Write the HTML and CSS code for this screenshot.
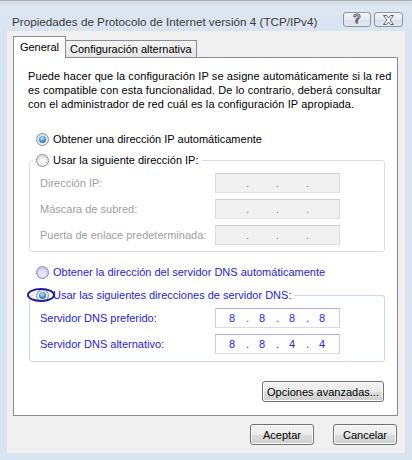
FILE: index.html
```html
<!DOCTYPE html>
<html lang="es">
<head>
    <meta charset="UTF-8">
    <title>Propiedades de Protocolo de Internet versión 4 (TCP/IPv4)</title>
    <link rel="stylesheet" href="styles.css">
</head>
<body>
    <div class="window">
        <div class="titlebar">
            <span class="title">Propiedades de Protocolo de Internet versión 4 (TCP/IPv4)</span>
            <div class="caption-buttons">
                <span class="caption-btn help">?</span>
                <span class="caption-btn close">
                    <svg width="13" height="10" viewBox="0 0 13 10">
                        <polygon points="1.5,0.5 4.5,0.5 6.5,3 8.5,0.5 11.5,0.5 8,5 11.5,9.5 8.5,9.5 6.5,7 4.5,9.5 1.5,9.5 5,5" fill="#fff" stroke="#5a6270" stroke-width="1" stroke-linejoin="round"/>
                    </svg>
                </span>
            </div>
        </div>
        <div class="client">
            <div class="tabs">
                <div class="tab active">General</div>
                <div class="tab">Configuración alternativa</div>
            </div>
            <div class="panel">
                <p class="intro">Puede hacer que la configuración IP se asigne automáticamente si la red<br>es compatible con esta funcionalidad. De lo contrario, deberá consultar<br>con el administrador de red cuál es la configuración IP apropiada.</p>

                <label class="radio-row first"><span class="radio checked"></span>Obtener una dirección IP automáticamente</label>

                <div class="group">
                    <label class="radio-row legend"><span class="radio"></span>Usar la siguiente dirección IP:</label>
                    <div class="field-row disabled">
                        <span>Dirección IP:</span>
                        <div class="ip"><span></span><i>.</i><span></span><i>.</i><span></span><i>.</i><span></span></div>
                    </div>
                    <div class="field-row disabled">
                        <span>Máscara de subred:</span>
                        <div class="ip"><span></span><i>.</i><span></span><i>.</i><span></span><i>.</i><span></span></div>
                    </div>
                    <div class="field-row disabled">
                        <span>Puerta de enlace predeterminada:</span>
                        <div class="ip"><span></span><i>.</i><span></span><i>.</i><span></span><i>.</i><span></span></div>
                    </div>
                </div>

                <label class="radio-row dns-auto"><span class="radio tinted"></span>Obtener la dirección del servidor DNS automáticamente</label>

                <div class="group dns-group">
                    <label class="radio-row legend"><span class="radio checked"></span>Usar las siguientes direcciones de servidor DNS:<span class="mark"></span></label>
                    <div class="field-row">
                        <span>Servidor DNS preferido:</span>
                        <div class="ip"><span>8</span><i>.</i><span>8</span><i>.</i><span>8</span><i>.</i><span>8</span></div>
                    </div>
                    <div class="field-row">
                        <span>Servidor DNS alternativo:</span>
                        <div class="ip"><span>8</span><i>.</i><span>8</span><i>.</i><span>4</span><i>.</i><span>4</span></div>
                    </div>
                </div>

                <div class="advanced">
                    <button class="button wide">Opciones avanzadas...</button>
                </div>
            </div>
            <div class="footer">
                <button class="button">Aceptar</button>
                <button class="button">Cancelar</button>
            </div>
        </div>
    </div>
</body>
</html>
```

FILE: styles.css
```css
body {
    margin: 0;
    font-family: 'Liberation Sans', Arial, sans-serif;
    font-size: 11px;
    color: #000;
    background-color: #fff;
}
.window {
    width: 412px;
    height: 460px;
    box-sizing: border-box;
    padding: 0 7px 7px 7px;
    display: flex;
    flex-direction: column;
    background-color: #d9e4f1;
    border-top: 1px solid #a9b0b8;
    overflow: hidden;
}
.titlebar {
    height: 30px;
    box-sizing: border-box;
    padding: 7px 9px 0 12px;
    margin: 0 -7px;
    display: flex;
    align-items: center;
    justify-content: space-between;
    background: linear-gradient(#d5dde6, #dde7f2 8px, #d9e4f1);
}
.title {
    font-size: 11.7px;
    color: #3a3a3a;
    padding-top: 4px;
}
.caption-buttons {
    display: flex;
    gap: 3px;
}
.caption-btn {
    width: 28px;
    height: 15px;
    box-sizing: border-box;
    border: 1px solid #8c95a4;
    border-radius: 3px;
    background: linear-gradient(#f3f6fa, #e4eaf1 50%, #d8e0ea 51%, #e2e9f1);
    display: flex;
    align-items: center;
    justify-content: center;
}
.caption-btn.help {
    font-size: 12px;
    font-weight: bold;
    color: #fff;
    -webkit-text-stroke: 1px #5a6270;
    line-height: 13px;
}
.caption-btn.close {
    width: 29px;
}
.client {
    flex: 1;
    background-color: #f0f0f0;
    display: flex;
    flex-direction: column;
}
.tabs {
    display: flex;
    align-items: flex-end;
    padding: 5px 0 0 6px;
    height: 21px;
}
.tab {
    box-sizing: border-box;
    border: 1px solid #898c95;
    border-bottom: none;
    height: 17px;
    padding: 0 4px;
    line-height: 16px;
    background: linear-gradient(#f4f4f4, #e6e6e6);
    margin-left: -1px;
}
.tab.active {
    height: 22px;
    width: 53px;
    margin-left: 0;
    margin-bottom: -1px;
    text-align: center;
    line-height: 20px;
    background: #fff;
    position: relative;
    z-index: 1;
}
.panel {
    margin-left: 6px;
    width: 385px;
    height: 359px;
    box-sizing: border-box;
    border: 1px solid #898c95;
    background-color: #fff;
}
.intro {
    margin: 11px 0 0 14px;
    line-height: 14px;
    letter-spacing: 0.1px;
}
.radio-row {
    display: flex;
    align-items: center;
    height: 20px;
}
.radio-row.first {
    margin: 18px 0 0 22px;
}
.radio-row.dns-auto {
    margin: 10px 0 0 22px;
    color: #1e1ed8;
}
.radio {
    width: 13px;
    height: 13px;
    box-sizing: border-box;
    border-radius: 50%;
    border: 1px solid #8f8f8f;
    background: radial-gradient(circle at 50% 60%, #f6f6f6 30%, #dcdcdc 70%, #ececec);
    margin-right: 4px;
    display: flex;
    align-items: center;
    justify-content: center;
}
.radio.checked::after {
    content: "";
    width: 7px;
    height: 7px;
    border-radius: 50%;
    background: radial-gradient(circle at 45% 35%, #c9ecff, #3a96e0 50%, #0f4f96);
}
.radio.tinted {
    border-color: #8c8cc8;
    background: radial-gradient(circle at 50% 60%, #e6e6fa 30%, #c4c4ec 70%, #d8d8f4);
}
.group {
    margin: 11px 0 0 15px;
    width: 356px;
    box-sizing: border-box;
    border: 1px solid #d5dfe5;
    border-radius: 3px;
    padding-bottom: 6px;
}
.group.dns-group {
    margin-top: 13px;
    border-color: #ccd6f4;
    padding-bottom: 7px;
    color: #1e1ed8;
}
.radio-row.legend {
    width: fit-content;
    margin: -11px 0 0 3px;
    padding: 0 3px;
    background-color: #fff;
    position: relative;
}
.mark {
    position: absolute;
    left: -6px;
    top: 3px;
    width: 28px;
    height: 14px;
    box-sizing: border-box;
    border: 2px solid #1d1d9c;
    border-radius: 50%;
}
.field-row {
    display: grid;
    grid-template-columns: 175px 125px;
    align-items: center;
    padding-left: 10px;
    margin-top: 6px;
}
.legend + .field-row {
    margin-top: 3px;
}
.field-row.disabled {
    color: #a0a0a0;
}
.ip {
    display: flex;
    height: 20px;
    box-sizing: border-box;
    padding-left: 2px;
    border: 1px solid;
    border-color: #a6aff4 #c6cdf8 #d4d9fb #c6cdf8;
    background-color: #fff;
    color: #2828f0;
    line-height: 18px;
}
.ip span {
    width: 28px;
    text-align: center;
}
.ip i {
    width: 2px;
    font-style: normal;
    text-align: center;
}
.disabled .ip {
    border-color: #cfcfcf #dcdcdc #e2e2e2 #dcdcdc;
    background-color: #f0f0f0;
    color: #8a8a8a;
}
.advanced {
    display: flex;
    justify-content: flex-end;
    margin: 19px 13px 0 0;
}
.button {
    width: 64px;
    height: 21px;
    padding: 0;
    font-family: inherit;
    font-size: 11px;
    color: #000;
    border: 1px solid #707070;
    border-radius: 3px;
    background: linear-gradient(#f2f2f2, #ebebeb 50%, #dddddd 51%, #cfcfcf);
    box-shadow: inset 0 0 0 1px #fcfcfc;
}
.button.wide {
    width: 122px;
}
.footer {
    display: flex;
    justify-content: flex-end;
    gap: 19px;
    padding: 8px 8px 0 0;
}
```
